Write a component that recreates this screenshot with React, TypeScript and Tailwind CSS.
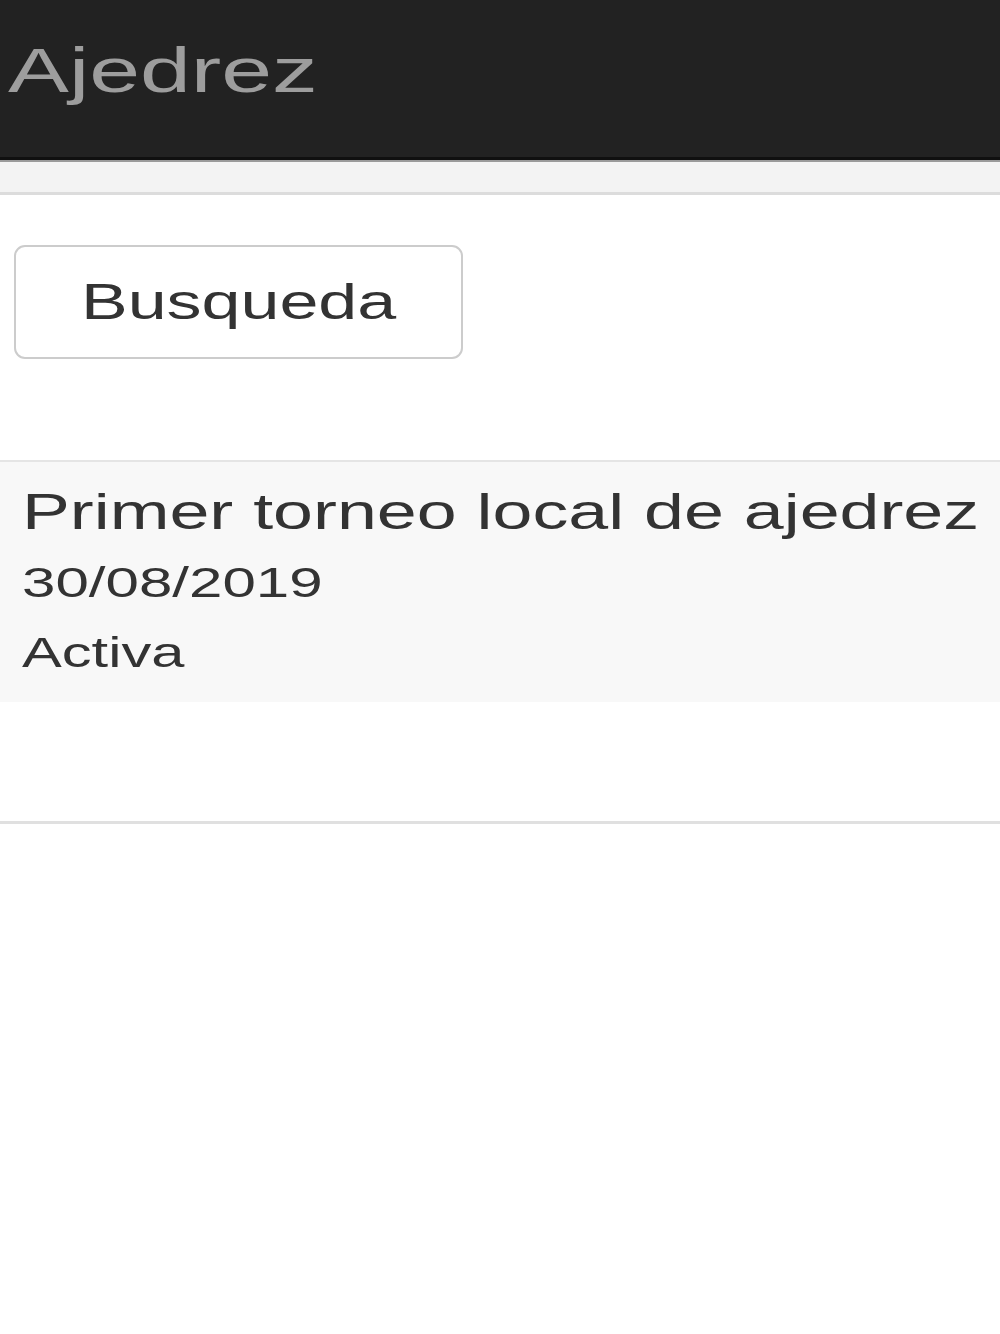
export default function App() {
  return (
    <div className="min-h-[1334px] w-full overflow-hidden bg-white font-['Liberation_Sans',Arial,sans-serif]">
      {/* navbar */}
      <header className="h-[160px] border-b-[3px] border-[#101010] bg-[#222222] pl-[8px] pt-[39px]">
        <span className="inline-block origin-left scale-x-[1.45] text-[63px] leading-none text-[#9d9d9d]">
          Ajedrez
        </span>
      </header>
      <div className="h-[35px] border-t-2 border-b-[3px] border-t-[#9a9a9a] border-b-[#dcdcdc] bg-[#f3f3f3]" />

      {/* busqueda */}
      <div className="pl-[14px] pt-[50px]">
        <button className="flex h-[114px] w-[449px] items-center justify-center rounded-[11px] border-2 border-[#cccccc] bg-white">
          <span className="inline-block scale-x-[1.4] text-[50px] leading-none text-[#333333]">Busqueda</span>
        </button>
      </div>

      {/* lista de torneos */}
      <div className="mt-[101px] border-t-2 border-[#e5e5e5]">
        <div className="flex flex-col bg-[#f8f8f8] pb-[28px] pl-[22px] pt-[25px] text-[#333333]">
          <span className="inline-block origin-left scale-x-[1.435] text-[50px] leading-none">
            Primer torneo local de ajedrez
          </span>
          <span className="mt-[25px] inline-block origin-left scale-x-[1.43] text-[42px] leading-none">
            30/08/2019
          </span>
          <span className="mt-[28px] inline-block origin-left scale-x-[1.42] text-[42px] leading-none">
            Activa
          </span>
        </div>
        <div className="mt-[119px] border-t-[3px] border-[#e0e0e0]" />
      </div>
    </div>
  );
}
